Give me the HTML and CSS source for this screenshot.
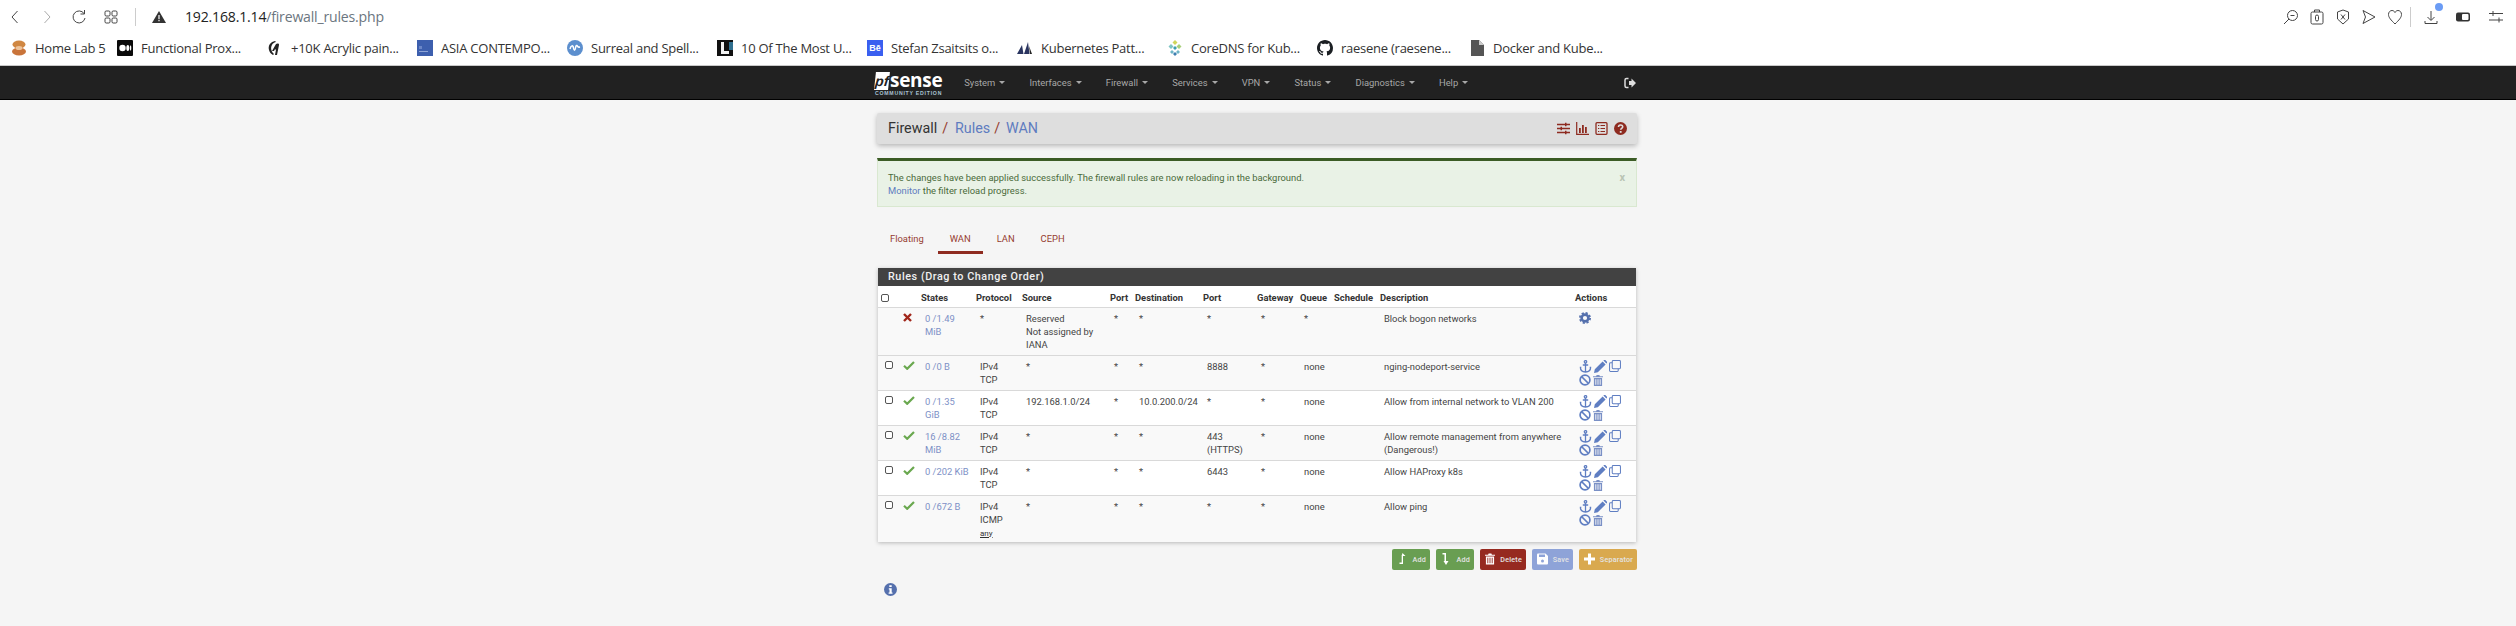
FILE: index.html
```html
<!DOCTYPE html>
<html lang="en">
<head>
<meta charset="utf-8">
<title>Firewall Rules WAN</title>
<link rel="stylesheet" href="styles.css">
</head>
<body>
<svg class="defs" width="0" height="0">
  <symbol id="i-anchor" viewBox="0 0 13 13"><g fill="none" stroke="currentColor" stroke-width="1.3"><circle cx="6.500" cy="1.800" r="1.200"/><path d="M6.500 3v9M3.800 5h5.400M.8 7.500h1.500M12.200 7.500h-1.500M1.400 7.500c0 2.600 2.400 4.300 5.100 4.500 2.700-.2 5.100-1.900 5.100-4.500"/></g></symbol>
  <symbol id="i-pencil" viewBox="0 0 13 13"><path fill="currentColor" d="M0 13l.8-3.800L8.600 1.400l3 3-7.800 7.800zM9.400.6l.6-.6c.4-.3 1-.3 1.300 0l1.700 1.700c.3.300.3.900 0 1.300l-.6.600z"/></symbol>
  <symbol id="i-clone" viewBox="0 0 13 13"><g fill="none" stroke="currentColor" stroke-width="1.100"><rect x="3.500" y=".6" width="8.900" height="8.900" rx="1"/><path d="M3.500 3H1.600a1 1 0 0 0-1 1v7.400a1 1 0 0 0 1 1H9a1 1 0 0 0 1-1V9.500"/></g></symbol>
  <symbol id="i-ban" viewBox="0 0 12 12"><g fill="none" stroke="currentColor" stroke-width="1.700"><circle cx="6" cy="6" r="4.900"/><path d="M2.500 2.500l7 7"/></g></symbol>
  <symbol id="i-trash" viewBox="0 0 11 12"><path fill="currentColor" d="M4 0h3l.6 1.200H11v1.300H0V1.200h3.400zM1 3.300h9V12H1zm1.600 1.400v6h1v-6zm2.400 0v6h1v-6zm2.400 0v6h1v-6z" fill-rule="evenodd"/></symbol>
  <symbol id="i-gear" viewBox="0 0 12 12"><circle cx="6" cy="6" r="3.400" fill="none" stroke="currentColor" stroke-width="2.600"/><circle cx="6" cy="6" r="5.100" fill="none" stroke="currentColor" stroke-width="1.800" stroke-dasharray="2.200 1.800"/></symbol>
  <symbol id="i-check" viewBox="0 0 12 9"><path d="M1 4.800l3.200 3L11 1" fill="none" stroke="currentColor" stroke-width="2.200"/></symbol>
  <symbol id="i-times" viewBox="0 0 9 9"><path d="M1 1l7 7M8 1L1 8" fill="none" stroke="currentColor" stroke-width="2.400"/></symbol>
</svg>

<header class="toolbar">
  <svg class="tb-icon" viewBox="0 0 16 16"><path d="M10.500 2L5 8l5.500 6" class="ln"/></svg>
  <svg class="tb-icon tb-off" viewBox="0 0 16 16"><path d="M5.500 2L11 8l-5.500 6" class="ln"/></svg>
  <svg class="tb-icon" viewBox="0 0 16 16"><path d="M13 4.500A6 6 0 1 0 14 9M13.500 1v4h-4" class="ln"/></svg>
  <svg class="tb-icon" viewBox="0 0 16 16"><g class="ln"><rect x="2" y="2" width="5" height="5" rx="1.200"/><rect x="9" y="2" width="5" height="5" rx="1.200"/><rect x="2" y="9" width="5" height="5" rx="1.200"/><rect x="9" y="9" width="5" height="5" rx="1.200"/></g></svg>
  <span class="tb-sep"></span>
  <svg class="tb-warn" viewBox="0 0 14 12"><path d="M7 0l7 12H0z" fill="#333"/><path d="M6.400 4h1.200v4.200H6.400zM6.400 9h1.200v1.300H6.400z" fill="#fff"/></svg>
  <span class="url"><b class="url-host">192.168.1.14</b>/firewall_rules.php</span>
  <div class="tb-right">
    <svg class="tb-icon" viewBox="0 0 16 16"><g class="ln"><circle cx="9.500" cy="6.500" r="5"/><path d="M6 10l-5 5M7.500 6.500h4"/></g></svg>
    <svg class="tb-icon" viewBox="0 0 16 16"><g class="ln"><rect x="2" y="3" width="12" height="12" rx="1.500"/><path d="M5.500 3V1h5v2"/><rect x="6.500" y="6" width="3" height="6" rx="1.500"/></g></svg>
    <svg class="tb-icon" viewBox="0 0 16 16"><g class="ln"><path d="M8 1l5.500 2v7L8 15l-5.500-5V3z"/><path d="M6 5.500l4 5M10 5.500l-4 5"/></g></svg>
    <svg class="tb-icon" viewBox="0 0 16 16"><path class="ln" d="M2 1.500L14 8 2 14.500 4.500 8z"/></svg>
    <svg class="tb-icon" viewBox="0 0 16 16"><path class="ln" d="M8 15C4 11 1.500 8.500 1.500 5.500 1.500 3 3.200 1.500 5 1.500c1.300 0 2.400.8 3 2 .6-1.200 1.700-2 3-2 1.800 0 3.500 1.500 3.500 4 0 3-2.500 5.500-6.500 9.500z"/></svg>
    <span class="tb-sep tb-sep-r"></span>
    <span class="dl">
      <svg class="tb-icon" viewBox="0 0 16 16"><path class="ln" d="M8 2v9M4.500 8L8 11.500 11.500 8M2 12v2.500h12V12"/></svg>
      <span class="dl-dot"></span>
    </span>
    <svg class="tb-icon tb-toggle" viewBox="0 0 16 16"><rect x="1" y="3.500" width="14" height="9" rx="2" fill="#333"/><rect x="7" y="5" width="6.500" height="6" rx="1" fill="#fff"/></svg>
    <svg class="tb-icon tb-sliders" viewBox="0 0 16 16"><path class="ln" d="M1 4.500h14M1 11h14M5 2v5M11 8.500v5"/></svg>
  </div>
</header>

<nav class="bookmarks">
  <a class="bm bm-first"><svg class="fav" viewBox="0 0 16 16"><ellipse cx="8" cy="4.500" rx="6.500" ry="4" fill="#d08742"/><ellipse cx="8" cy="11.500" rx="7" ry="4" fill="#c9743a"/><ellipse cx="8" cy="8" rx="3.500" ry="2" fill="#eec39a"/></svg>Home Lab 5</a>
  <a class="bm"><svg class="fav" viewBox="0 0 16 16"><rect width="16" height="16" rx="1" fill="#0a0a0a"/><circle cx="5.500" cy="8" r="3.200" fill="#fff"/><ellipse cx="10.800" cy="8" rx="1.500" ry="3" fill="#fff"/><ellipse cx="13.600" cy="8" rx=".7" ry="2.700" fill="#fff"/></svg>Functional Prox...</a>
  <a class="bm"><svg class="fav" viewBox="0 0 16 16"><path d="M8 1a7 7 0 0 0-6 9c.5 2 2 4 4 5l1-1C4.500 12 3.500 9 4.500 6S8 2 9 2zM9 4l-4 7h2l.8-1.500h1.200L8 15h2l2-10c.3-1.500-1.500-2-3-1z" fill="#222"/></svg>+10K Acrylic pain...</a>
  <a class="bm"><svg class="fav" viewBox="0 0 16 16"><rect width="16" height="16" fill="#3d5fae"/><rect x="2" y="11" width="9" height="1" fill="#8ea4d6"/><rect x="2" y="6" width="3" height="3" fill="#6b86c7"/></svg>ASIA CONTEMPO...</a>
  <a class="bm"><svg class="fav" viewBox="0 0 16 16"><circle cx="8" cy="8" r="8" fill="#5c8fce"/><path d="M3 9c1-4 3-4 3.500-1s1.500 3 2 0 1-3 1.800-2 1 1.500 2.700 1" fill="none" stroke="#fff" stroke-width="1.500"/></svg>Surreal and Spell...</a>
  <a class="bm"><svg class="fav" viewBox="0 0 16 16"><rect width="16" height="16" fill="#111"/><path d="M4 2h3v9h5v3H4z" fill="#f3f3f3"/><rect x="12" y="2" width="4" height="8" fill="#2f6f8f"/></svg>10 Of The Most U...</a>
  <a class="bm"><span class="fav fav-be">Bē</span>Stefan Zsaitsits o...</a>
  <a class="bm"><svg class="fav" viewBox="0 0 16 16"><path d="M0 14L5 5l1.500 9zM7 14L11 2l1.500 12z" fill="#2a3560"/><path d="M13 14l-1-8 3 8z" fill="#222"/></svg>Kubernetes Patt...</a>
  <a class="bm"><svg class="fav" viewBox="0 0 16 16"><path d="M8 0l2.500 2.500L8 5 5.500 2.500z" fill="#cfd65a"/><path d="M4 4l2.500 2.500L4 9 1.500 6.500z" fill="#7fc4c4"/><path d="M12 4l2.500 2.500L12 9 9.500 6.500z" fill="#a8cf7a"/><path d="M8 6l2 2-2 2-2-2z" fill="#3e9fb0"/><path d="M5 10l2 2-2 2-2-2zM11 10l2 2-2 2-2-2z" fill="#6fb5c7"/><path d="M8 12l2 2-2 2-2-2z" fill="#3e7fb0"/></svg>CoreDNS for Kub...</a>
  <a class="bm"><svg class="fav" viewBox="0 0 16 16"><path fill="#1b1f23" d="M8 0C3.580 0 0 3.580 0 8c0 3.540 2.290 6.530 5.470 7.590.4.070.55-.17.55-.38 0-.19-.01-.82-.01-1.490-2.010.37-2.530-.49-2.690-.94-.09-.23-.48-.94-.82-1.130-.28-.15-.68-.52-.01-.53.63-.01 1.080.58 1.230.82.720 1.210 1.870.87 2.330.66.070-.52.28-.87.51-1.070-1.780-.2-3.640-.89-3.640-3.950 0-.87.31-1.590.82-2.150-.08-.2-.36-1.020.08-2.120 0 0 .67-.21 2.200.82.64-.18 1.320-.27 2-.27.68 0 1.360.09 2 .27 1.530-1.040 2.200-.82 2.200-.82.44 1.100.16 1.920.08 2.120.51.56.82 1.270.82 2.150 0 3.070-1.870 3.750-3.650 3.950.29.25.54.73.54 1.480 0 1.070-.01 1.930-.01 2.200 0 .21.15.46.55.38A8.013 8.013 0 0 0 16 8c0-4.420-3.580-8-8-8z"/></svg>raesene (raesene...</a>
  <a class="bm bm-doc"><svg class="fav" viewBox="0 0 16 16"><path d="M2 0h8l5 5v11H2z" fill="#555"/><path d="M10 0v5h5z" fill="#ccc"/></svg>Docker and Kube...</a>
</nav>

<nav class="appnav">
  <div class="appnav-inner">
    <a class="logo">
      <span class="logo-top"><span class="logo-pf">pf</span><span class="logo-sense">sense</span></span>
      <span class="logo-ce">COMMUNITY EDITION</span>
    </a>
    <a class="nav-item">System</a>
    <a class="nav-item">Interfaces</a>
    <a class="nav-item">Firewall</a>
    <a class="nav-item">Services</a>
    <a class="nav-item">VPN</a>
    <a class="nav-item">Status</a>
    <a class="nav-item">Diagnostics</a>
    <a class="nav-item">Help</a>
    <svg class="logout" viewBox="0 0 12 12"><path d="M4.500 1.500H2.500A1.500 1.500 0 0 0 1 3v6a1.500 1.500 0 0 0 1.500 1.500h2" fill="none" stroke="#ddd" stroke-width="1.500"/><path d="M5 4h2.500V1.500L12 6l-4.500 4.500V8H5z" fill="#ddd"/></svg>
  </div>
</nav>

<main class="page">
  <div class="container">
    <div class="crumbs">
      <h1 class="crumb-title">Firewall<span class="slash">/</span><a class="crumb-link">Rules</a><span class="slash">/</span><a class="crumb-link">WAN</a></h1>
      <div class="crumb-icons">
        <svg class="ci" viewBox="0 0 13 13"><path d="M0 2.500h13M0 6.500h13M0 10.500h13" stroke="currentColor" stroke-width="1.500" fill="none"/><path d="M8 .8h1.500v3.400H8zM3.500 4.800H5v3.400H3.500zM8 8.800h1.500v3.400H8z" fill="currentColor"/></svg>
        <svg class="ci" viewBox="0 0 13 13"><path d="M.7 0v12.300H13" fill="none" stroke="currentColor" stroke-width="1.200"/><path d="M3 6h1.800v5H3zM6 3h1.800v8H6zM9 5h1.800v6H9z" fill="currentColor"/></svg>
        <svg class="ci" viewBox="0 0 13 13"><rect x="1" y=".7" width="11" height="11.600" rx="1" fill="none" stroke="currentColor" stroke-width="1.300"/><path d="M3 3.500h1.300M5.500 3.500H10M3 6.500h1.300M5.500 6.500H10M3 9.500h1.300M5.500 9.500H10" stroke="currentColor" stroke-width="1.200" fill="none"/></svg>
        <svg class="ci" viewBox="0 0 13 13"><circle cx="6.500" cy="6.500" r="6.500" fill="currentColor"/><path d="M4.500 5c0-2.700 4.200-2.700 4.200-.2 0 1.700-2 1.500-2 3" fill="none" stroke="#dedede" stroke-width="1.600"/><rect x="5.800" y="9" width="1.800" height="1.800" fill="#dedede"/></svg>
      </div>
    </div>

    <div class="alert">
      <p class="alert-text">The changes have been applied successfully. The firewall rules are now reloading in the background.<br><a class="link">Monitor</a> the filter reload progress.</p>
      <span class="alert-close">x</span>
    </div>

    <ul class="tabs">
      <li class="tab">Floating</li>
      <li class="tab tab-active">WAN</li>
      <li class="tab">LAN</li>
      <li class="tab">CEPH</li>
    </ul>

    <section class="panel">
      <h2 class="panel-head">Rules (Drag to Change Order)</h2>
      <table class="rules">
        <colgroup>
          <col class="c-check"><col class="c-status"><col class="c-states"><col class="c-proto"><col class="c-source"><col class="c-port"><col class="c-dest"><col class="c-dport"><col class="c-gw"><col class="c-queue"><col class="c-sched"><col class="c-desc"><col class="c-act">
        </colgroup>
        <thead>
          <tr>
            <th><input class="cb" type="checkbox"></th><th></th><th>States</th><th>Protocol</th><th>Source</th><th>Port</th><th>Destination</th><th>Port</th><th>Gateway</th><th>Queue</th><th>Schedule</th><th>Description</th><th>Actions</th>
          </tr>
        </thead>
        <tbody>
          <tr class="alt">
            <td></td>
            <td><svg class="st st-x"><use href="#i-times"/></svg></td>
            <td class="states">0 /1.49<br>MiB</td>
            <td>*</td><td>Reserved<br>Not assigned by<br>IANA</td><td>*</td><td>*</td><td>*</td><td>*</td><td>*</td><td></td>
            <td>Block bogon networks</td>
            <td><svg class="gear"><use href="#i-gear"/></svg></td>
          </tr>
          <tr class="alt">
            <td><input class="cb" type="checkbox"></td>
            <td><svg class="st st-ok"><use href="#i-check"/></svg></td>
            <td class="states">0 /0 B</td>
            <td>IPv4<br>TCP</td><td>*</td><td>*</td><td>*</td><td>8888</td><td>*</td><td>none</td><td></td>
            <td>nging-nodeport-service</td>
            <td><div class="acts"><svg class="a a-w"><use href="#i-anchor"/></svg><svg class="a a-w"><use href="#i-pencil"/></svg><svg class="a a-c"><use href="#i-clone"/></svg><svg class="a a-b"><use href="#i-ban"/></svg><svg class="a a-t"><use href="#i-trash"/></svg></div></td>
          </tr>
          <tr>
            <td><input class="cb" type="checkbox"></td>
            <td><svg class="st st-ok"><use href="#i-check"/></svg></td>
            <td class="states">0 /1.35<br>GiB</td>
            <td>IPv4<br>TCP</td><td>192.168.1.0/24</td><td>*</td><td>10.0.200.0/24</td><td>*</td><td>*</td><td>none</td><td></td>
            <td>Allow from internal network to VLAN 200</td>
            <td><div class="acts"><svg class="a a-w"><use href="#i-anchor"/></svg><svg class="a a-w"><use href="#i-pencil"/></svg><svg class="a a-c"><use href="#i-clone"/></svg><svg class="a a-b"><use href="#i-ban"/></svg><svg class="a a-t"><use href="#i-trash"/></svg></div></td>
          </tr>
          <tr class="alt">
            <td><input class="cb" type="checkbox"></td>
            <td><svg class="st st-ok"><use href="#i-check"/></svg></td>
            <td class="states">16 /8.82<br>MiB</td>
            <td>IPv4<br>TCP</td><td>*</td><td>*</td><td>*</td><td>443<br>(HTTPS)</td><td>*</td><td>none</td><td></td>
            <td>Allow remote management from anywhere<br>(Dangerous!)</td>
            <td><div class="acts"><svg class="a a-w"><use href="#i-anchor"/></svg><svg class="a a-w"><use href="#i-pencil"/></svg><svg class="a a-c"><use href="#i-clone"/></svg><svg class="a a-b"><use href="#i-ban"/></svg><svg class="a a-t"><use href="#i-trash"/></svg></div></td>
          </tr>
          <tr>
            <td><input class="cb" type="checkbox"></td>
            <td><svg class="st st-ok"><use href="#i-check"/></svg></td>
            <td class="states">0 /202 KiB</td>
            <td>IPv4<br>TCP</td><td>*</td><td>*</td><td>*</td><td>6443</td><td>*</td><td>none</td><td></td>
            <td>Allow HAProxy k8s</td>
            <td><div class="acts"><svg class="a a-w"><use href="#i-anchor"/></svg><svg class="a a-w"><use href="#i-pencil"/></svg><svg class="a a-c"><use href="#i-clone"/></svg><svg class="a a-b"><use href="#i-ban"/></svg><svg class="a a-t"><use href="#i-trash"/></svg></div></td>
          </tr>
          <tr class="alt last">
            <td><input class="cb" type="checkbox"></td>
            <td><svg class="st st-ok"><use href="#i-check"/></svg></td>
            <td class="states">0 /672 B</td>
            <td>IPv4<br>ICMP<br><span class="any">any</span></td><td>*</td><td>*</td><td>*</td><td>*</td><td>*</td><td>none</td><td></td>
            <td>Allow ping</td>
            <td><div class="acts"><svg class="a a-w"><use href="#i-anchor"/></svg><svg class="a a-w"><use href="#i-pencil"/></svg><svg class="a a-c"><use href="#i-clone"/></svg><svg class="a a-b"><use href="#i-ban"/></svg><svg class="a a-t"><use href="#i-trash"/></svg></div></td>
          </tr>
        </tbody>
      </table>
    </section>

    <div class="btn-row">
      <button class="btn btn-green b-add"><svg class="bi" viewBox="0 0 8 12"><path d="M0 11h3.500V3H6L3 0 2 3h.2v6.500H0z" transform="translate(1 0)" fill="#fff"/></svg><span>Add</span></button>
      <button class="btn btn-green b-add"><svg class="bi" viewBox="0 0 8 12"><path d="M0 0h3.500v8H6l-2.500 4L1 8h1V1.500H0z" fill="#fff"/></svg><span>Add</span></button>
      <button class="btn btn-red b-del"><svg class="bi bi-t"><use href="#i-trash"/></svg><span>Delete</span></button>
      <button class="btn btn-blue b-save"><svg class="bi" viewBox="0 0 11 11"><path d="M1 0h7.500L11 2.500V10a1 1 0 0 1-1 1H1a1 1 0 0 1-1-1V1a1 1 0 0 1 1-1z" fill="#fff"/><circle cx="5.500" cy="7.500" r="1.500" fill="#8ea3d8"/><rect x="2" y="1" width="6" height="2.500" fill="#8ea3d8"/></svg><span>Save</span></button>
      <button class="btn btn-yellow b-sep"><svg class="bi" viewBox="0 0 11 11"><path d="M4 0h3v4h4v3H7v4H4V7H0V4h4z" fill="#fff"/></svg><span>Separator</span></button>
    </div>

    <svg class="info" viewBox="0 0 13 13"><circle cx="6.500" cy="6.500" r="6.500" fill="#5570ad"/><path d="M5.300 2.300h2.400v1.800H5.300zM4.800 5.200h2.900v4.300h.8v1.300H4.600V9.500h.9V6.500h-.7z" fill="#fff"/></svg>
  </div>
</main>
</body>
</html>
```

FILE: styles.css
```css
* { box-sizing: border-box; }
html, body { margin: 0; padding: 0; height: 626px; overflow: hidden; }
body { background: #f5f5f5; font-family: Roboto, "Liberation Sans", sans-serif; font-size: 9.38px; line-height: 13px; color: #444; }
a { color: inherit; text-decoration: none; }
.defs { display: block; height: 0; }

/* browser chrome */
.toolbar { height: 33px; background: #fff; display: flex; align-items: center; padding-left: 7px; }
.tb-icon { width: 16px; height: 16px; flex: none; margin-right: 16px; }
.ln { fill: none; stroke: #444; stroke-width: 1; }
.tb-off .ln { stroke: #aaa; }
.tb-sep { width: 1px; height: 18px; background: #ccc; margin-right: 16px; flex: none; }
.tb-warn { width: 14px; height: 12px; flex: none; margin-right: 19px; }
.url { font-family: "Open Sans", sans-serif; font-size: 14.1px; color: #6b7680; letter-spacing: -0.2px; }
.url-host { font-weight: 400; color: #222; }
.tb-right { margin-left: auto; display: flex; align-items: center; padding-right: 12px; }
.tb-right .tb-icon { margin-right: 10px; }
.tb-sep-r { margin: 0 12px 0 -3px; height: 20px; }
.dl { position: relative; display: flex; margin-right: 6px; }
.dl-dot { position: absolute; right: 6px; top: -6px; width: 8px; height: 8px; border-radius: 50%; background: #6b9cf5; }
.tb-right .tb-toggle { margin-right: 17px; }
.tb-right .tb-sliders { margin-right: 0; }

.bookmarks { height: 33px; background: #fff; border-bottom: 1px solid #c9c9c9; display: flex; align-items: center; padding-left: 11px; padding-bottom: 2px; font-family: "Open Sans", sans-serif; font-size: 13px; color: #333; letter-spacing: -0.25px; }
.bm { width: 150px; flex: none; display: flex; align-items: center; gap: 8px; white-space: nowrap; }
.bm-first { width: 106px; }
.bm-doc { margin-left: 2px; }
.fav { width: 16px; height: 16px; flex: none; }
.fav-be { background: #3a5ff0; color: #fff; font: 700 9px/16px "Liberation Sans", sans-serif; text-align: center; letter-spacing: 0; }

/* pfSense top bar */
.appnav { height: 34px; background: #212121; border-bottom: 1px solid #000; }
.appnav-inner { width: 766px; height: 33px; margin: 0 auto; display: flex; align-items: center; gap: 24.2px; }
.logo { display: flex; flex-direction: column; width: 70px; margin-right: -5px; padding-top: 3px; }
.logo-top { display: flex; align-items: center; height: 19px; }
.logo-pf { width: 14px; height: 18px; background: #fff; color: #212121; font: italic 700 14px/18px "Liberation Sans", sans-serif; text-align: center; transform: skewX(-6deg); }
.logo-sense { color: #fff; font: 700 19px/19px "Open Sans", sans-serif; letter-spacing: -0.3px; margin-left: 1px; }
.logo-ce { font: 700 5.2px/7px "Liberation Sans", sans-serif; letter-spacing: 0.75px; color: #a9c3d3; white-space: nowrap; }
.nav-item { color: #a8a8a8; font-size: 9.38px; display: flex; align-items: center; }
.nav-item::after { content: ""; margin-left: 4px; border-top: 3px solid #a8a8a8; border-left: 3px solid transparent; border-right: 3px solid transparent; }
.logout { width: 12px; height: 12px; margin-left: auto; margin-right: 5px; }

/* page */
.page { display: flex; justify-content: center; padding-right: 2px; }
.container { width: 758px; }
.crumbs { height: 31px; margin: 13px -1px 0; background: #dedede; border-radius: 2px; box-shadow: 0 2px 5px rgba(0,0,0,.25); display: flex; align-items: center; justify-content: space-between; padding: 0 10px 0 11px; }
.crumb-title { margin: 0; font-weight: 400; font-size: 14.3px; color: #333; }
.slash { color: #953c30; margin: 0 7px 0 5px; }
.crumb-link + .slash { margin: 0 6px 0 4px; }
.crumb-link { color: #5f7cc0; }
.crumb-icons { display: flex; gap: 6px; color: #8e2b20; }
.ci { width: 13px; height: 13px; }
.alert { height: 49px; margin: 14px -1px 0; background: #e9f2e6; border: 1px solid #d9e8d0; border-top: 3px solid #3c5c26; padding: 10px 11px 0 10px; display: flex; justify-content: space-between; color: #4a6a3a; }
.alert-text { margin: 0; }
.link { color: #5f7cc0; }
.alert-close { font-weight: 700; font-size: 11px; color: #b9c4b4; }
.tabs { list-style: none; margin: 16px 0 14px; padding: 0; display: flex; height: 31px; }
.tab { padding: 9px 12px 0; color: #953c30; border-bottom: 3px solid transparent; margin-right: 2px; }
.tab-active { border-bottom-color: #8e2b20; }
.panel { background: #fff; box-shadow: 0 1px 4px rgba(0,0,0,.25); }
.panel-head { margin: 0; height: 18px; padding-left: 10px; background: #424242; color: #f0f0f0; font-size: 10.8px; line-height: 18px; font-weight: 500; letter-spacing: 0.55px; }
.rules { width: 758px; table-layout: fixed; border-collapse: collapse; }
.c-check { width: 18px; } .c-status { width: 22px; } .c-states { width: 55px; } .c-proto { width: 46px; }
.c-source { width: 88px; } .c-port { width: 25px; } .c-dest { width: 68px; } .c-dport { width: 54px; }
.c-gw { width: 43px; } .c-queue { width: 34px; } .c-sched { width: 46px; } .c-desc { width: 195px; } .c-act { width: 64px; }
.rules th { height: 21px; padding: 2px 0 0 3px; text-align: left; font-weight: 700; color: #333; white-space: nowrap; }
.rules td { vertical-align: top; padding: 4px 0 4px 7px; border-top: 1px solid #d9d9d9; white-space: nowrap; }
.rules .last td { padding-bottom: 3px; }
.alt { background: #f9f9f9; }
.states { color: #7d90c6; }
.cb { appearance: none; display: block; margin: 1px 0 0; width: 8px; height: 8px; border: 1px solid #555; border-radius: 2px; background: #fff; }
.st { display: block; margin-top: 1px; }
.st-ok { width: 12px; height: 9px; color: #6aa84f; }
.st-x { width: 9px; height: 9px; color: #a1261a; }
.gear { width: 12px; height: 12px; color: #5570ad; display: block; }
.acts { display: grid; grid-template-columns: 15px 15px 13px; grid-auto-rows: 13px; color: #5f7ec2; }
.a { display: block; }
.a-w { width: 13px; height: 13px; }
.a-c { width: 12px; height: 12px; }
.a-b { width: 12px; height: 12px; margin-top: 1px; }
.a-t { width: 10px; height: 11px; margin-top: 2px; margin-left: -1px; color: #7a90c6; }
.any { font-size: 8px; line-height: 0; text-decoration: underline; color: #333; }

.btn-row { display: flex; justify-content: flex-end; gap: 6px; margin: 7px -1px 0 0; }
.btn { height: 21px; border: 0; border-radius: 2px; padding: 0 4px 0 5px; display: flex; align-items: center; justify-content: space-between; font: 500 7.2px/21px Roboto, sans-serif; letter-spacing: .2px; color: #e4e4e4; }
.btn-green { background: #699e52; }
.btn-red { background: #962a20; }
.btn-blue { background: #8ea3d8; }
.btn-yellow { background: #d9a94f; }
.b-add { width: 38px; }
.b-del { width: 46px; }
.b-save { width: 41px; }
.b-sep { width: 58px; }
.bi { width: 11px; height: 12px; color: #fff; flex: none; }
.bi-t { width: 10px; height: 12px; }
.info { display: block; width: 13px; height: 13px; margin: 13px 0 0 6px; }
```
